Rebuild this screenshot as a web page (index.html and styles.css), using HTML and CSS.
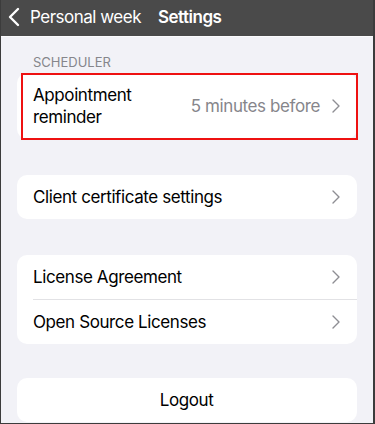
FILE: index.html
```html
<!DOCTYPE html>
<html lang="en">
<head>
  <meta charset="UTF-8" />
  <title>Settings</title>
  <link rel="stylesheet" href="styles.css">
</head>
<body>
  <div class="ecran">
    <div class="entete">
      <span class="retour">
        <svg width="12" height="20" viewBox="0 0 12 20"><path d="M10 2 L2 10 L10 18" fill="none" stroke="#fff" stroke-width="2.4" stroke-linecap="round" stroke-linejoin="round"/></svg>
        Personal week
      </span>
      <span class="titre">Settings</span>
    </div>

    <div class="contenu">
      <div class="section">SCHEDULER</div>
      <div class="carte marquee">
        <div class="ligne haute">
          <span class="libelle">Appointment<br>reminder</span>
          <span class="valeur">5 minutes before</span>
          <svg class="chevron" width="8" height="14" viewBox="0 0 8 14"><path d="M1 1 L7 7 L1 13" fill="none" stroke="#8e8e93" stroke-width="1.4" stroke-linecap="round" stroke-linejoin="round"/></svg>
        </div>
        <div class="cadre"></div>
      </div>

      <div class="carte">
        <div class="ligne">
          <span class="libelle">Client certificate settings</span>
          <svg class="chevron" width="8" height="14" viewBox="0 0 8 14"><path d="M1 1 L7 7 L1 13" fill="none" stroke="#8e8e93" stroke-width="1.4" stroke-linecap="round" stroke-linejoin="round"/></svg>
        </div>
      </div>

      <div class="carte">
        <div class="ligne">
          <span class="libelle">License Agreement</span>
          <svg class="chevron" width="8" height="14" viewBox="0 0 8 14"><path d="M1 1 L7 7 L1 13" fill="none" stroke="#8e8e93" stroke-width="1.4" stroke-linecap="round" stroke-linejoin="round"/></svg>
        </div>
        <div class="separateur"></div>
        <div class="ligne">
          <span class="libelle">Open Source Licenses</span>
          <svg class="chevron" width="8" height="14" viewBox="0 0 8 14"><path d="M1 1 L7 7 L1 13" fill="none" stroke="#8e8e93" stroke-width="1.4" stroke-linecap="round" stroke-linejoin="round"/></svg>
        </div>
      </div>

      <div class="carte deconnexion">
        <div class="ligne centre">Logout</div>
      </div>
    </div>
  </div>
</body>
</html>
```

FILE: styles.css
```css
* { box-sizing: border-box; }
html, body {
  margin: 0; padding: 0; height: 100vh;
  font-family: Inter, "Noto Sans", sans-serif;
  overflow: hidden;
}
.ecran {
  height: 100vh;
  background: #f2f2f7;
  border: 1px solid #3c3c3c; border-top: none; border-right-width: 2px;
  display: flex; flex-direction: column;
}
.entete {
  flex-shrink: 0;
  height: 37px; background: #4a4a4a; color: #fff;
  display: flex; align-items: center; gap: 17px;
  padding-left: 7px; padding-bottom: 2px; font-size: 17px; letter-spacing: -0.5px;
  border-bottom: 1px solid #fbfbfd;
}
.retour { display: flex; align-items: center; gap: 10px; }
.titre { font-weight: 600; }

.contenu {
  padding: 0 16px;
  display: flex; flex-direction: column; gap: 36px;
}
.section {
  font-size: 13px; color: #86868b;
  padding: 14px 0 0 16px; margin-bottom: -36px; line-height: 22px;
}
.carte {
  background: #fff; border-radius: 10px; position: relative;
}
.deconnexion { margin-top: -2px; }
.ligne {
  height: 44px; display: flex; align-items: center;
  padding: 0 17px 0 16px; font-size: 17px; color: #000;
  letter-spacing: -0.4px;
}
.ligne.haute { height: 66px; }
.libelle { flex: 1; line-height: 22px; }
.valeur { color: #86868b; margin-right: 12px; }
.centre { justify-content: center; }
.separateur { height: 1px; background: #e2e2e5; margin-left: 16px; }

.cadre {
  position: absolute; left: 4px; right: -1px; top: 0; bottom: -1px;
  border: 2px solid #ee1111;
}
```
